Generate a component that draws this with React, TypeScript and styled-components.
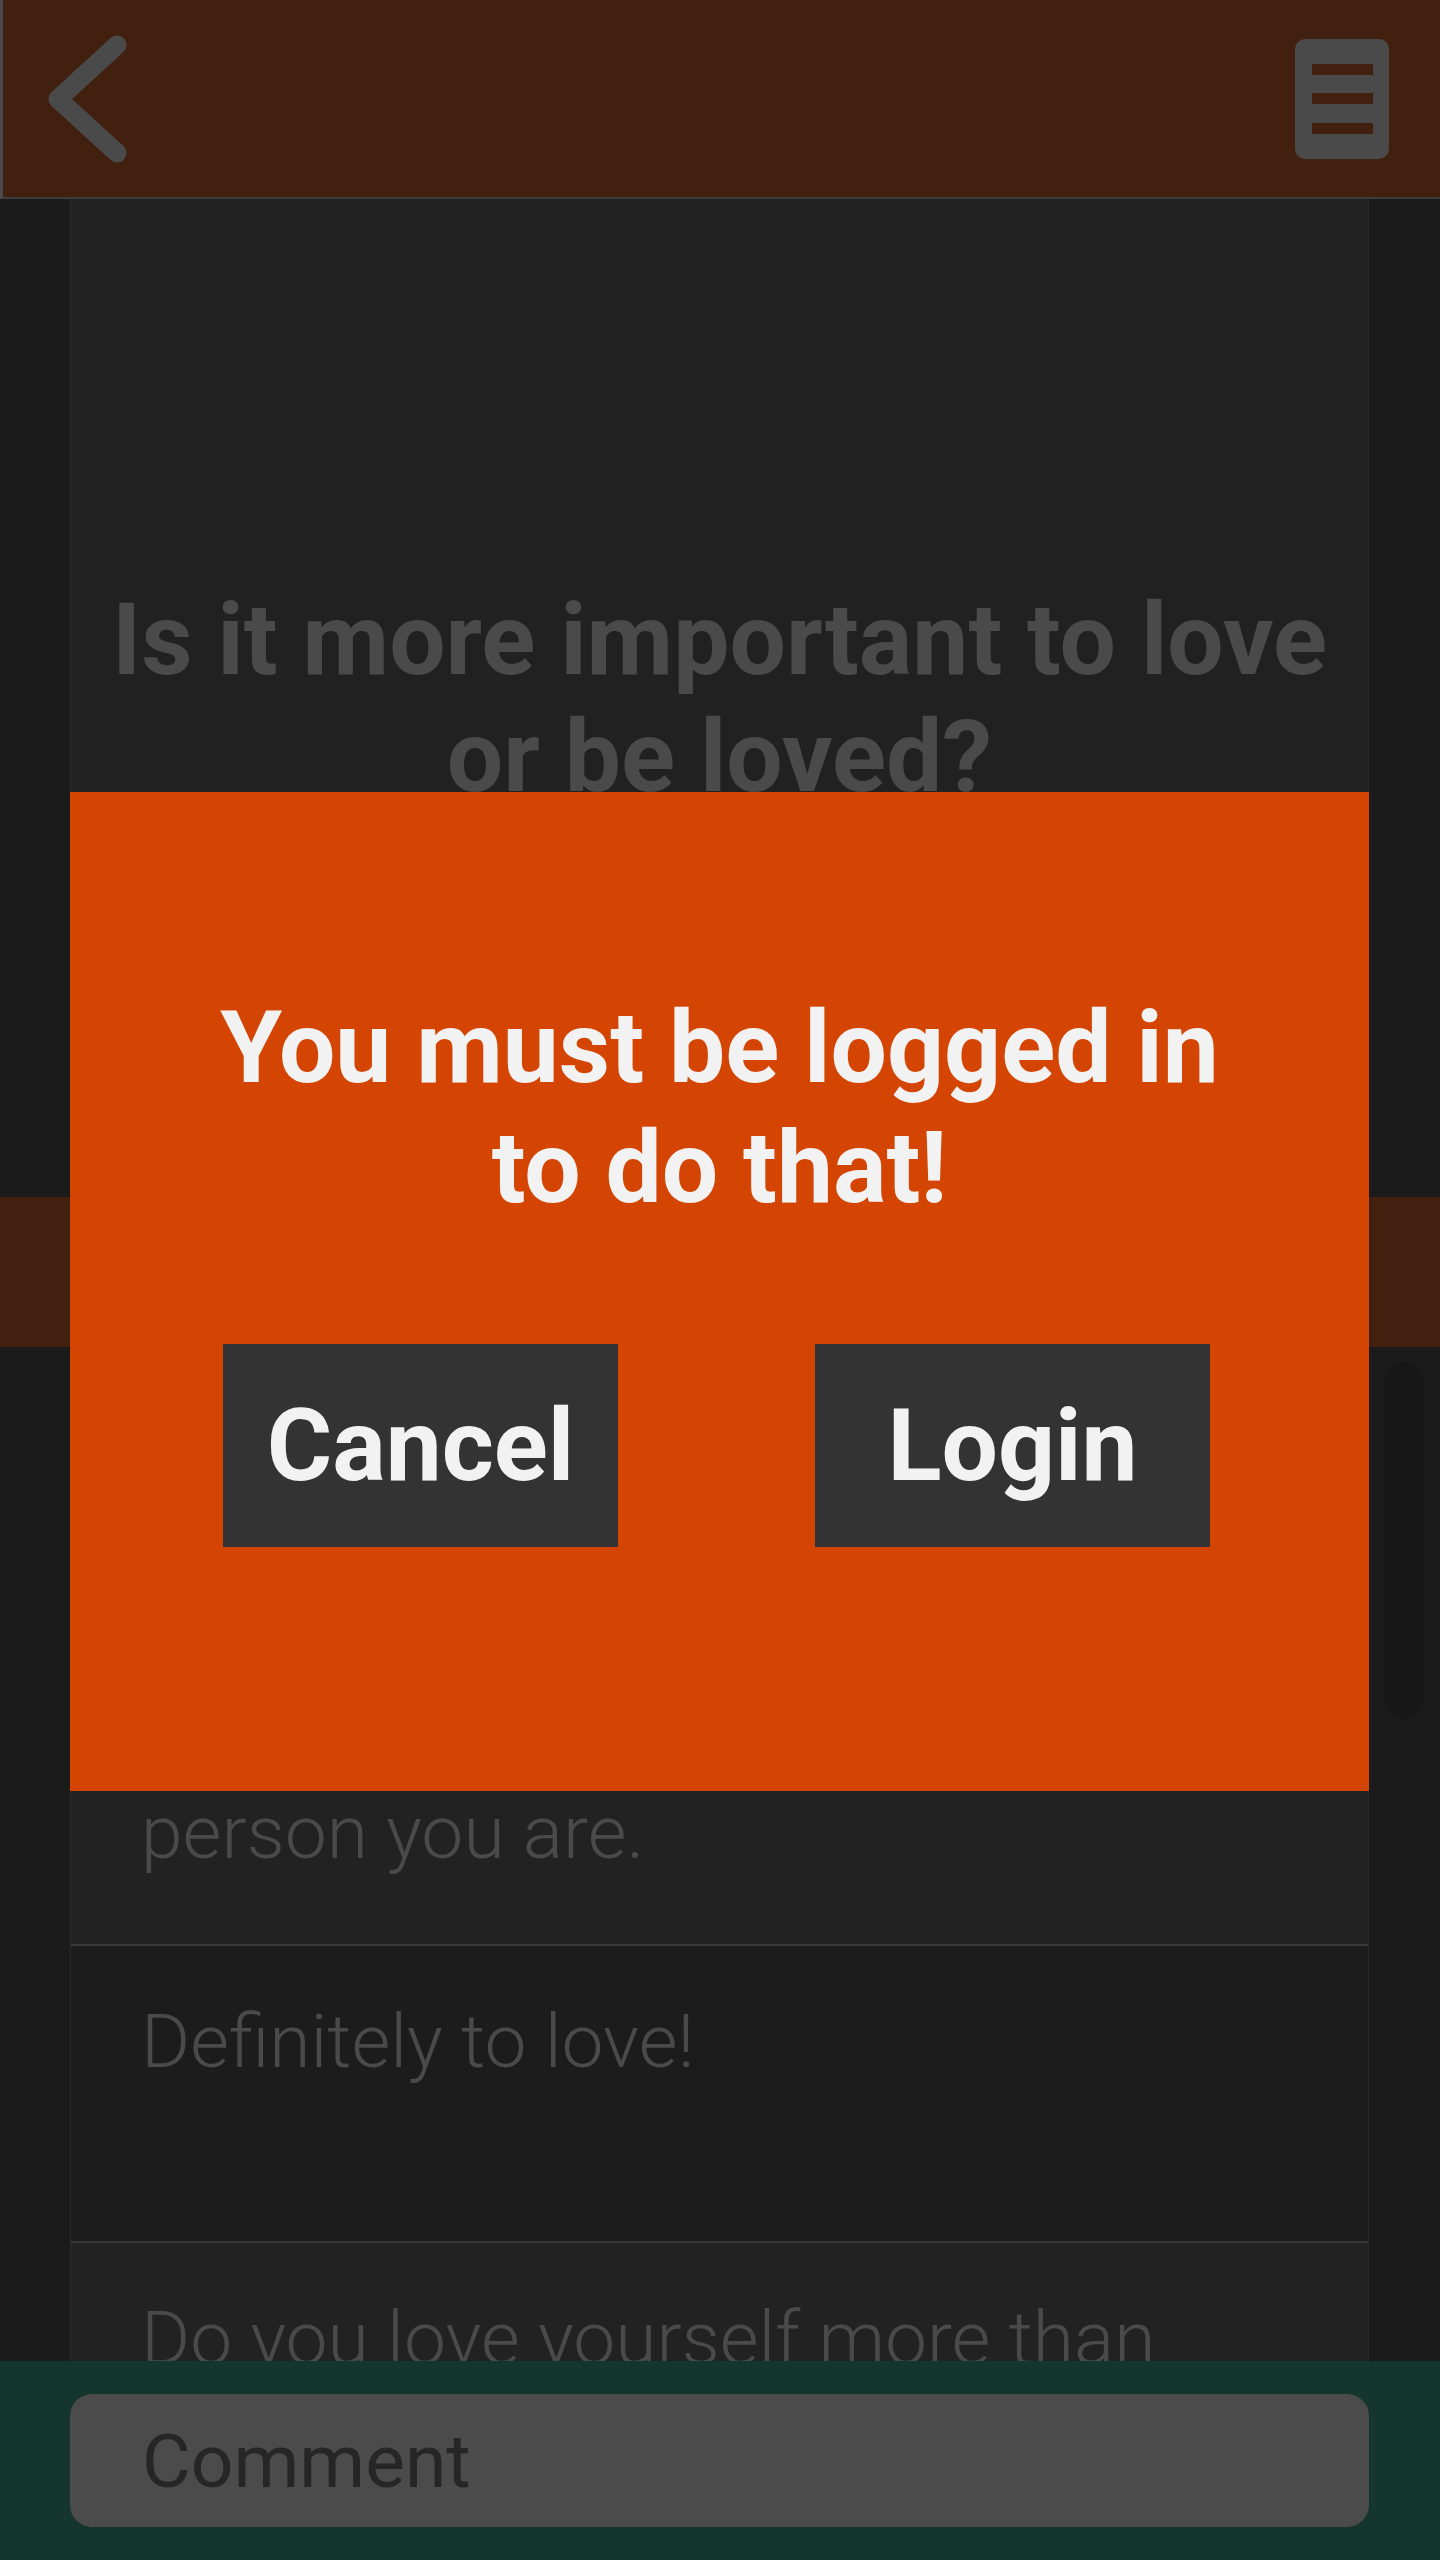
import styled, { createGlobalStyle } from 'styled-components';

const GlobalStyle = createGlobalStyle`
  html, body {
    margin: 0;
    padding: 0;
    background-color: #1b1b1b;
  }
  * {
    box-sizing: border-box;
  }
  body {
    font-family: Roboto, "Liberation Sans", Arial, sans-serif;
  }
`;

const answers = [
  {
    id: 1,
    text: (
      <>
        Being loved feels good, but loving
        <br />
        someone shows the kind of
        <br />
        person you are.
      </>
    ),
    shade: '#222222',
    height: 599,
    alignEnd: true,
  },
  { id: 2, text: <>Definitely to love!</>, shade: '#1c1c1c', height: 297, alignEnd: false },
  {
    id: 3,
    text: (
      <>
        Do you love yourself more than
        <br />
        you love others?
      </>
    ),
    shade: '#222222',
    height: 400,
    alignEnd: false,
  },
];

const App = () => {
  return (
    <Page>
      <GlobalStyle />
      <Header>
        <BackButton aria-label="back">
          <svg width="140" height="197" viewBox="0 0 140 197">
            <path
              d="M114 45 L55 99 L114 153"
              fill="none"
              stroke="#4a4a4a"
              strokeWidth="19"
              strokeLinecap="round"
              strokeLinejoin="round"
            />
          </svg>
        </BackButton>
        <MenuButton aria-label="menu">
          <svg width="94" height="120" viewBox="0 0 94 120">
            <rect x="0" y="0" width="94" height="120" rx="10" fill="#4a4a4a" />
            <rect x="17" y="25" width="61" height="11" fill="#42200f" />
            <rect x="17" y="54" width="61" height="11" fill="#42200f" />
            <rect x="17" y="84" width="61" height="11" fill="#42200f" />
          </svg>
        </MenuButton>
      </Header>

      <QuestionSection>
        <QuestionCard>
          <Question>Is it more important to love or be loved?</Question>
        </QuestionCard>
      </QuestionSection>

      <TabBand />

      <AnswerArea>
        <AnswerList>
          {answers.map((answer) => (
            <AnswerRow
              key={answer.id}
              $shade={answer.shade}
              $height={answer.height}
              $alignEnd={answer.alignEnd}
            >
              <AnswerText>{answer.text}</AnswerText>
            </AnswerRow>
          ))}
        </AnswerList>
        <ScrollThumb />
      </AnswerArea>

      <Footer>
        <CommentInput placeholder="Comment" />
      </Footer>

      <Modal>
        <ModalTitle>You must be logged in to do that!</ModalTitle>
        <ModalActions>
          <ModalButton>Cancel</ModalButton>
          <ModalButton>Login</ModalButton>
        </ModalActions>
      </Modal>
    </Page>
  );
};

export default App;

const Page = styled.div`
  position: relative;
  width: 1440px;
  height: 2560px;
  display: flex;
  flex-direction: column;
  overflow: hidden;
  background-color: #1b1b1b;
`;

const Header = styled.header`
  display: flex;
  justify-content: space-between;
  align-items: center;
  height: 199px;
  flex-shrink: 0;
  background-color: #42200f;
  border-left: 3px solid #4a4a4a;
  border-bottom: 2px solid #3d3d3d;
`;

const BackButton = styled.button`
  display: flex;
  padding: 0;
  border: none;
  background: none;
`;

const MenuButton = styled.button`
  display: flex;
  padding: 0;
  margin-right: 51px;
  border: none;
  background: none;
`;

const QuestionSection = styled.section`
  height: 998px;
  flex-shrink: 0;
  display: flex;
`;

const QuestionCard = styled.div`
  width: 1299px;
  margin-left: 70px;
  display: flex;
  align-items: center;
  justify-content: center;
  padding: 0 40px;
  background-color: #212121;
  border-left: 1px solid #2a2a2a;
  border-right: 1px solid #2a2a2a;
`;

const Question = styled.h1`
  margin: 0;
  font-size: 100px;
  line-height: 117px;
  font-weight: 700;
  color: #4a4a4a;
  text-align: center;
`;

const TabBand = styled.div`
  height: 150px;
  flex-shrink: 0;
  background-color: #42200f;
`;

const AnswerArea = styled.div`
  position: relative;
  flex: 1;
  overflow: hidden;
`;

const AnswerList = styled.div`
  width: 1299px;
  margin-left: 70px;
  display: flex;
  flex-direction: column;
  border-left: 1px solid #2a2a2a;
  border-right: 1px solid #2a2a2a;
`;

const AnswerRow = styled.div<{ $shade: string; $height: number; $alignEnd: boolean }>`
  height: ${(p) => p.$height}px;
  flex-shrink: 0;
  display: flex;
  flex-direction: column;
  justify-content: ${(p) => (p.$alignEnd ? 'flex-end' : 'flex-start')};
  padding: ${(p) => (p.$alignEnd ? '0 70px 67px' : '50px 70px 0')};
  background-color: ${(p) => p.$shade};
  border-bottom: 2px solid #393939;
`;

const AnswerText = styled.p`
  margin: 0;
  font-size: 75px;
  line-height: 90px;
  font-weight: 300;
  color: #4a4a4a;
`;

const ScrollThumb = styled.div`
  position: absolute;
  top: 15px;
  right: 17px;
  width: 38px;
  height: 357px;
  border-radius: 19px;
  background-color: #171717;
`;

const Footer = styled.footer`
  height: 199px;
  flex-shrink: 0;
  padding: 33px 71px 33px 70px;
  background-color: #15352f;
`;

const CommentInput = styled.input`
  width: 100%;
  height: 133px;
  padding: 0 0 0 72px;
  border: none;
  border-radius: 22px;
  outline: none;
  background-color: #4b4b4b;
  font-family: Roboto, "Liberation Sans", Arial, sans-serif;
  font-size: 75px;
  font-weight: 400;
  color: #262626;

  &::placeholder {
    color: #262626;
  }
`;

const Modal = styled.div`
  position: absolute;
  top: 792px;
  left: 70px;
  width: 1299px;
  height: 999px;
  display: flex;
  flex-direction: column;
  padding-top: 196px;
  background-color: #d44503;
`;

const ModalTitle = styled.h2`
  margin: 0;
  padding: 0 120px;
  font-size: 100px;
  line-height: 120px;
  font-weight: 700;
  color: #f2f2f2;
  text-align: center;
`;

const ModalActions = styled.div`
  display: flex;
  gap: 197px;
  margin-top: 116px;
  padding-left: 153px;
`;

const ModalButton = styled.button`
  width: 395px;
  height: 203px;
  display: flex;
  align-items: center;
  justify-content: center;
  padding: 0;
  border: none;
  border-radius: 0;
  background-color: #333333;
  font-family: Roboto, "Liberation Sans", Arial, sans-serif;
  font-size: 100px;
  font-weight: 700;
  color: #f2f2f2;
`;
